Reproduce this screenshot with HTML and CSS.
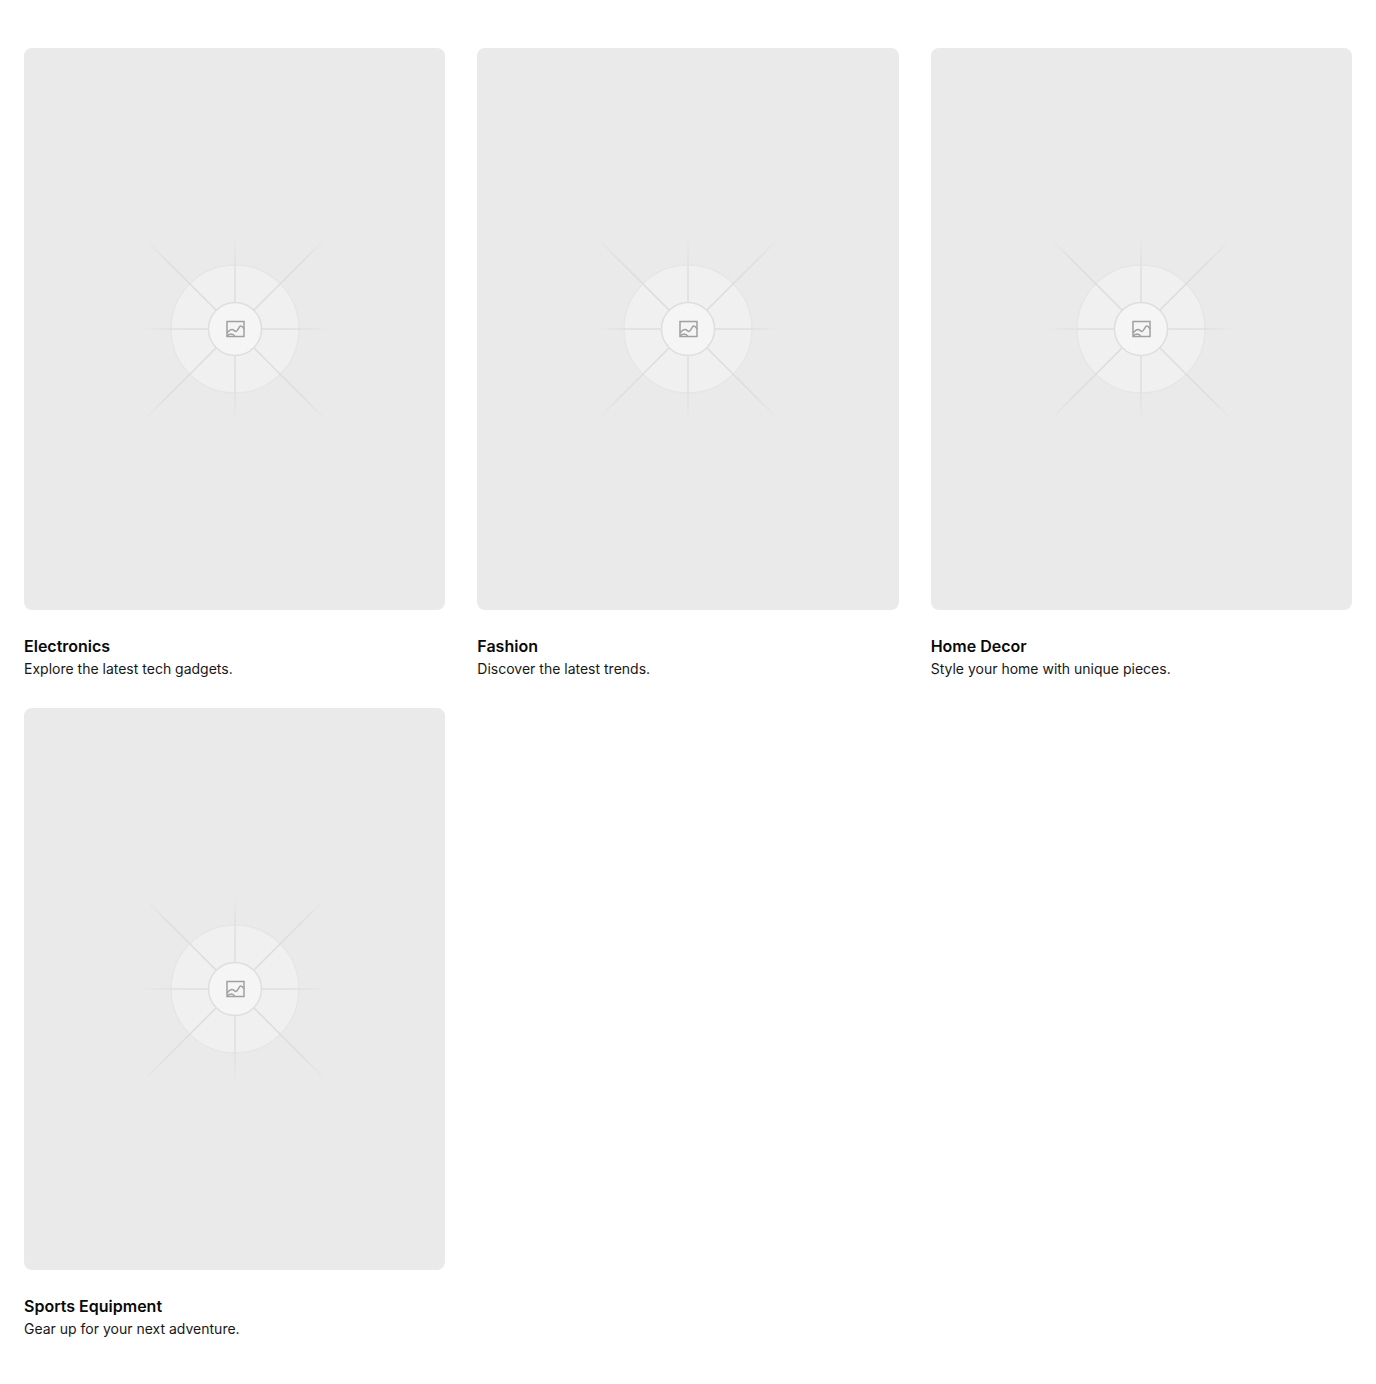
FILE: index.html
```html
<!DOCTYPE html>
<html lang="en">
<head>
    <meta charset="UTF-8">
    <meta name="viewport" content="width=device-width, initial-scale=1.0">
    <title>Categories</title>
    <link rel="stylesheet" href="styles.css">
</head>
<body>
    <svg class="defs" width="0" height="0" aria-hidden="true">
        <defs>
            <radialGradient id="crossFade" gradientUnits="userSpaceOnUse" cx="100" cy="100" r="94">
                <stop offset="0.3" stop-color="#dedede"/>
                <stop offset="0.72" stop-color="#e0e0e0"/>
                <stop offset="1" stop-color="#eaeaea"/>
            </radialGradient>
            <radialGradient id="diagFade" gradientUnits="userSpaceOnUse" cx="100" cy="100" r="128">
                <stop offset="0.2" stop-color="#dcdcdc"/>
                <stop offset="0.75" stop-color="#dedede"/>
                <stop offset="1" stop-color="#eaeaea"/>
            </radialGradient>
            <filter id="soft" x="-10%" y="-10%" width="120%" height="120%">
                <feGaussianBlur stdDeviation="0.4"/>
            </filter>
            <symbol id="placeholder" viewBox="0 0 200 200">
                <g filter="url(#soft)">
                    <circle class="outer" cx="100" cy="100" r="64"/>
                    <path class="rays-cross" d="M100 8V192M8 100H192"/>
                    <path class="rays-diag" d="M12 12L188 188M188 12L12 188"/>
                    <circle class="inner" cx="100" cy="100" r="26.5"/>
                    <rect class="glyph" x="92" y="92.500" width="17" height="15"/>
                    <path class="glyph" d="M92 104C94 101.500 95.500 100.500 97 100.500C99 100.500 99.500 102.500 101 102.500C103 102 104 97.500 105.500 97C107 96.500 108 98 109 100M92 107.500C94 104 98 104 100 107.500"/>
                </g>
            </symbol>
        </defs>
    </svg>

    <main class="grid">
        <article class="card">
            <div class="thumb"><svg class="art"><use href="#placeholder"/></svg></div>
            <h3 class="card-title">Electronics</h3>
            <p class="card-text">Explore the latest tech gadgets.</p>
        </article>
        <article class="card">
            <div class="thumb"><svg class="art"><use href="#placeholder"/></svg></div>
            <h3 class="card-title">Fashion</h3>
            <p class="card-text">Discover the latest trends.</p>
        </article>
        <article class="card">
            <div class="thumb"><svg class="art"><use href="#placeholder"/></svg></div>
            <h3 class="card-title">Home Decor</h3>
            <p class="card-text">Style your home with unique pieces.</p>
        </article>
        <article class="card">
            <div class="thumb"><svg class="art"><use href="#placeholder"/></svg></div>
            <h3 class="card-title">Sports Equipment</h3>
            <p class="card-text">Gear up for your next adventure.</p>
        </article>
    </main>
</body>
</html>
```

FILE: styles.css
```css
* {
    box-sizing: border-box;
}

body {
    margin: 0;
    background-color: #fff;
    color: #0a0a0a;
    font-family: Inter, "Liberation Sans", sans-serif;
    text-rendering: optimizeSpeed;
}

.defs {
    position: absolute;
}

.grid {
    display: grid;
    grid-template-columns: repeat(3, 1fr);
    column-gap: 32px;
    row-gap: 28px;
    padding: 48px 24px;
}

.thumb {
    display: flex;
    align-items: center;
    justify-content: center;
    aspect-ratio: 3 / 4;
    border-radius: 8px;
    background-color: #eaeaea;
}

.art {
    width: 200px;
    height: 200px;
}

.outer {
    fill: #f0f0f0;
    stroke: #e6e6e6;
    stroke-width: 1.5;
}

.inner {
    fill: #f5f5f5;
    stroke: #dedede;
    stroke-width: 1.5;
}

.rays-cross {
    fill: none;
    stroke: url(#crossFade);
    stroke-width: 1.5;
}

.rays-diag {
    fill: none;
    stroke: url(#diagFade);
    stroke-width: 1.5;
}

.glyph {
    fill: none;
    stroke: #a0a0a0;
    stroke-width: 1.5;
}

.card-title {
    margin: 24px 0 0;
    font-size: 16px;
    line-height: 24px;
    font-weight: 600;
}

.card-text {
    margin: 0;
    font-size: 14px;
    line-height: 22.4px;
    font-weight: 400;
    color: #171717;
}
```
